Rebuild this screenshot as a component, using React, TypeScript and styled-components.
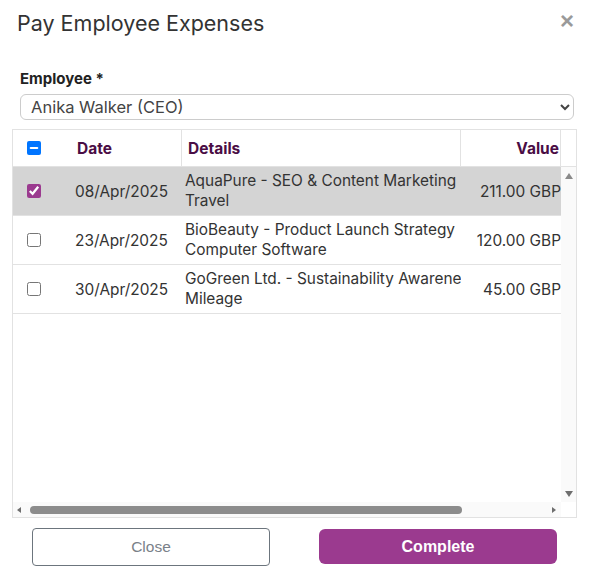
import React, { useEffect, useRef } from "react";
import styled, { createGlobalStyle } from "styled-components";

const Global = createGlobalStyle`
  html, body { margin: 0; padding: 0; background: #fff; }
  body { font-family: Inter, "Noto Sans", sans-serif; color: #333; }
  * { box-sizing: border-box; }
`;

const Dialog = styled.div`
  width: 589px;
  height: 572px;
  display: flex;
  flex-direction: column;
  background: #fff;
`;

const Header = styled.div`
  display: flex;
  justify-content: space-between;
  align-items: flex-start;
  padding: 9px 15px 0 17px;
  height: 62px;
`;

const Title = styled.h1`
  margin: 0;
  font-family: Inter, sans-serif;
  font-weight: 400;
  font-size: 21.5px;
  line-height: 28px;
  color: #333;
`;

const CloseX = styled.button`
  border: 0;
  background: none;
  padding: 0;
  font-family: "Liberation Sans", Arial, sans-serif;
  font-size: 24px;
  font-weight: 700;
  line-height: 24px;
  color: #9a9a9a;
  cursor: pointer;
`;

const Field = styled.div`
  display: flex;
  flex-direction: column;
  padding: 8px 15px 0 20px;
  gap: 7px;
`;

const Label = styled.label`
  font-family: Inter, sans-serif;
  font-size: 15px;
  font-weight: 700;
  color: #222;
  line-height: 17px;
`;

const Select = styled.select`
  height: 26px;
  width: 554px;
  border: 1px solid #ccc;
  border-radius: 6px;
  padding: 0 6px;
  font-family: Inter, sans-serif;
  font-size: 16.5px;
  color: #444;
  background: #fff;
`;

const TableBox = styled.div`
  margin: 9px 12px 0 12px;
  border: 1px solid #e2e2e2;
  height: 389px;
  display: grid;
  grid-template-columns: 548px 1fr;
  grid-template-rows: 37px 1fr 15px;
  overflow: hidden;
`;

const HeadRow = styled.div`
  display: grid;
  grid-template-columns: 58px 111px 279px 100px;
  border-bottom: 1px solid #e2e2e2;
`;

const HeadGutter = styled.div`
  border-bottom: 1px solid #e2e2e2;
`;

const HeadCell = styled.div<{ $right?: boolean }>`
  display: flex;
  align-items: center;
  justify-content: ${(p) => (p.$right ? "flex-end" : "flex-start")};
  padding: 0 ${(p) => (p.$right ? "1px" : "6px")} 0 6px;
  border-right: 1px solid #e2e2e2;
  font-family: Inter, sans-serif;
  font-size: 15.5px;
  font-weight: 700;
  color: #4a0d45;
`;

const CheckCell = styled.div`
  display: flex;
  align-items: center;
  justify-content: flex-start;
  padding-left: 14px;
`;

const Viewport = styled.div`
  overflow: hidden;
`;

const Rows = styled.div`
  width: 660px;
`;

const Row = styled.div<{ $selected?: boolean }>`
  display: grid;
  grid-template-columns: 58px 111px 279px 100px 112px;
  height: 49px;
  border-bottom: 1px solid #e2e2e2;
  background: ${(p) => (p.$selected ? "#d4d4d4" : "transparent")};
  font-family: Inter, sans-serif;
  font-size: 15.4px;
  color: #333;
`;

const Cell = styled.div<{ $right?: boolean }>`
  display: flex;
  align-items: center;
  justify-content: ${(p) => (p.$right ? "flex-end" : "flex-start")};
  padding: 0 ${(p) => (p.$right ? "0" : "4px")} 0 4px;
  white-space: nowrap;
  overflow: hidden;
`;

const Details = styled.div`
  display: flex;
  flex-direction: column;
  justify-content: center;
  padding: 0 0 0 3px;
  line-height: 20px;
  white-space: nowrap;
  overflow: hidden;
  text-overflow: clip;
`;

const Box = styled.input<{ $accent: string }>`
  margin: 0;
  width: 14px;
  height: 14px;
  accent-color: ${(p) => p.$accent};
`;

const VScroll = styled.div`
  background: #fafafa;
  display: flex;
  flex-direction: column;
  justify-content: space-between;
  align-items: center;
  padding: 6px 0 5px 0;
`;

const HScroll = styled.div`
  background: #fafafa;
  display: flex;
  align-items: center;
  padding: 0 0 0 4px;
`;

const Corner = styled.div`
  background: #fff;
`;

const Arrow = styled.span<{ $dir: "up" | "down" | "left" | "right" }>`
  width: 0;
  height: 0;
  flex: none;
  border-style: solid;
  border-color: transparent;
  ${(p) =>
    p.$dir === "up"
      ? "border-width: 0 4.5px 6px 4.5px; border-bottom-color: #8a8a8a;"
      : p.$dir === "down"
      ? "border-width: 6px 4.5px 0 4.5px; border-top-color: #6e6e6e;"
      : p.$dir === "left"
      ? "border-width: 3.5px 4px 3.5px 0; border-right-color: #6e6e6e;"
      : "border-width: 3.5px 0 3.5px 4px; border-left-color: #6e6e6e;"}
`;

const Thumb = styled.div`
  width: 432px;
  height: 8px;
  margin: 0 auto 0 9px;
  border-radius: 4px;
  background: #8c8c8c;
`;

const RightArrowSlot = styled.div`
  width: 9px;
  display: flex;
  justify-content: flex-start;
`;

const Footer = styled.div`
  display: flex;
  justify-content: space-between;
  padding: 10px 32px 0 32px;
`;

const Button = styled.button<{ $primary?: boolean }>`
  width: 238px;
  height: ${(p) => (p.$primary ? "35px" : "38px")};
  margin-top: ${(p) => (p.$primary ? "1px" : "0")};
  border-radius: ${(p) => (p.$primary ? "6px" : "4px")};
  border: ${(p) => (p.$primary ? "none" : "1px solid #6c757d")};
  background: ${(p) => (p.$primary ? "#9b3a8f" : "#fff")};
  color: ${(p) => (p.$primary ? "#fff" : "#7a8189")};
  font-family: "Liberation Sans", Arial, sans-serif;
  font-size: ${(p) => (p.$primary ? "16px" : "15.5px")};
  font-weight: ${(p) => (p.$primary ? 700 : 400)};
  cursor: pointer;
`;

const rows = [
  { date: "08/Apr/2025", title: "AquaPure - SEO & Content Marketing", cat: "Travel", value: "211.00 GBP", sel: true },
  { date: "23/Apr/2025", title: "BioBeauty - Product Launch Strategy", cat: "Computer Software", value: "120.00 GBP", sel: false },
  { date: "30/Apr/2025", title: "GoGreen Ltd. - Sustainability Awareness Campaign", cat: "Mileage", value: "45.00 GBP", sel: false },
];

export default function App() {
  const allRef = useRef<HTMLInputElement>(null);
  useEffect(() => {
    if (allRef.current) allRef.current.indeterminate = true;
  }, []);
  return (
    <Dialog>
      <Global />
      <Header>
        <Title>Pay Employee Expenses</Title>
        <CloseX aria-label="Close">×</CloseX>
      </Header>
      <Field>
        <Label>Employee *</Label>
        <Select defaultValue="anika">
          <option value="anika">Anika Walker (CEO)</option>
        </Select>
      </Field>
      <TableBox>
        <HeadRow>
          <CheckCell>
            <Box type="checkbox" ref={allRef} $accent="#0075ff" readOnly />
          </CheckCell>
          <HeadCell>Date</HeadCell>
          <HeadCell>Details</HeadCell>
          <HeadCell $right>Value</HeadCell>
        </HeadRow>
        <HeadGutter />
        <Viewport>
          <Rows>
            {rows.map((r) => (
              <Row key={r.date} $selected={r.sel}>
                <CheckCell>
                  <Box type="checkbox" defaultChecked={r.sel} $accent="#9b3a8f" />
                </CheckCell>
                <Cell>{r.date}</Cell>
                <Details>
                  <span>{r.title}</span>
                  <span>{r.cat}</span>
                </Details>
                <Cell $right>{r.value}</Cell>
                <Cell />
              </Row>
            ))}
          </Rows>
        </Viewport>
        <VScroll>
          <Arrow $dir="up" />
          <Arrow $dir="down" />
        </VScroll>
        <HScroll>
          <Arrow $dir="left" />
          <Thumb />
          <RightArrowSlot>
            <Arrow $dir="right" />
          </RightArrowSlot>
        </HScroll>
        <Corner />
      </TableBox>
      <Footer>
        <Button>Close</Button>
        <Button $primary>Complete</Button>
      </Footer>
    </Dialog>
  );
}
